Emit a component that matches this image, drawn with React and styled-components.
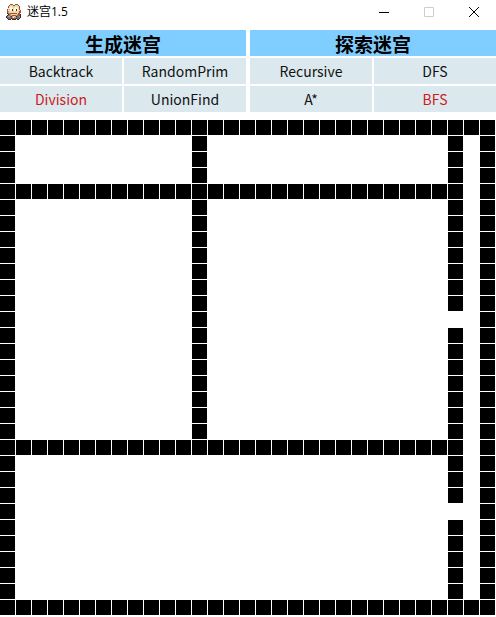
import React, { useState } from "react";
import styled, { createGlobalStyle } from "styled-components";

const GlobalStyle = createGlobalStyle`
  *, *::before, *::after { box-sizing: border-box; }
  body {
    margin: 0;
    background: #fff;
    color: #000;
    font-family: "Noto Sans CJK SC", sans-serif;
  }
`;

const Window = styled.main`
  display: flex;
  flex-direction: column;
`;

const TitleBar = styled.header`
  display: flex;
  align-items: center;
  height: 24px;
  margin-bottom: 6px;
  padding-left: 6px;
`;

const Title = styled.h1`
  flex: 1;
  margin: 0 0 0 5px;
  font-family: "Open Sans", "Noto Sans CJK SC", sans-serif;
  font-size: 12px;
  line-height: 24px;
  font-weight: 400;
`;

const WindowButton = styled.button`
  display: flex;
  align-items: center;
  justify-content: center;
  width: 45px;
  height: 24px;
  padding: 0;
  border: 0;
  background: transparent;
  color: ${({ disabled }) => (disabled ? "#cccfc8" : "#000")};
`;

const Toolbar = styled.div`
  display: grid;
  grid-template-columns: 1fr 1fr;
  gap: 4px;
  margin-bottom: 8px;
`;

const Group = styled.section`
  display: grid;
  grid-template-columns: 1fr 1fr;
  grid-auto-rows: 26px;
  gap: 2px;
`;

const GroupTitle = styled.h2`
  grid-column: 1 / -1;
  margin: 0;
  background: #80ceff;
  font-size: 19px;
  line-height: 28px;
  font-weight: 700;
  text-align: center;
`;

const OptionButton = styled.button`
  padding: 0;
  border: 0;
  background: #dbe9ee;
  color: ${({ $active }) => ($active ? "#cb1b1b" : "#111")};
  font-family: inherit;
  font-size: 14px;
  line-height: 26px;
  text-align: center;
`;

const MazeGrid = styled.div`
  display: grid;
  grid-template-columns: repeat(31, 1fr);
  gap: 1px;
  padding: 0 1px 1px 0;
`;

const Cell = styled.div`
  aspect-ratio: 1;
  background: ${({ $wall }) => ($wall ? "#000" : "#fff")};
`;

const ICON_COLORS = {
  k: "#3b2a25",
  b: "#8c5a3c",
  y: "#eed9a0",
  w: "#fffaf0",
  r: "#b8453a",
  g: "#77706f",
  l: "#aaa39e",
  o: "#d99b5b",
};

const ICON_ROWS = [
  "....bbb..bbb....",
  "...byyybbyyyb...",
  "..byyyyyyyyyyb..",
  "..rywwyyywwyyr..",
  "..ywwwwywwwwyr..",
  ".ryowwkywwkwyr..",
  ".ryywwkywwkwyyr.",
  ".royyyyyyyyyyrr.",
  ".boyyyyyyyyyyrb.",
  ".kborrrrrrryrb..",
  "..kboyyyyyyorbk.",
  ".kgglobbbblggbk.",
  "kgllgklyylkgglk.",
  "kggggglyolggggk.",
  ".kgggkbrrbkggk..",
  "..kkk.kkkk.kk...",
];

function AppIcon() {
  return (
    <svg width="16" height="16" viewBox="0 0 16 16" shapeRendering="crispEdges" aria-hidden="true">
      {ICON_ROWS.flatMap((row, y) =>
        [...row].map((key, x) =>
          key === "." ? null : (
            <rect key={`${x}-${y}`} x={x} y={y} width="1" height="1" fill={ICON_COLORS[key]} />
          )
        )
      )}
    </svg>
  );
}

const GLYPHS = {
  minimize: <path d="M0 5.5h10" />,
  maximize: <path d="M.5.5h9v9h-9z" />,
  close: <path d="M0 0l10 10M10 0l-10 10" />,
};

function WindowControl({ type, label, disabled }) {
  return (
    <WindowButton type="button" aria-label={label} disabled={disabled}>
      <svg width="10" height="10" viewBox="0 0 10 10" fill="none" stroke="currentColor">
        {GLYPHS[type]}
      </svg>
    </WindowButton>
  );
}

function OptionGroup({ title, options, initial }) {
  const [selected, setSelected] = useState(initial);
  return (
    <Group>
      <GroupTitle>{title}</GroupTitle>
      {options.map((option) => (
        <OptionButton
          key={option}
          type="button"
          $active={option === selected}
          aria-pressed={option === selected}
          onClick={() => setSelected(option)}
        >
          {option}
        </OptionButton>
      ))}
    </Group>
  );
}

const SIZE = 31;
const LAST = SIZE - 1;

function isWall(row, col) {
  if (row === 0 || row === LAST || col === 0 || col === LAST) return true;
  if (col === 28) return row !== 12 && row !== 24;
  if (col < 28 && (row === 4 || row === 20)) return true;
  return col === 12 && row < 20;
}

function Maze() {
  return (
    <MazeGrid role="img" aria-label="迷宫">
      {Array.from({ length: SIZE * SIZE }, (_, i) => (
        <Cell key={i} $wall={isWall(Math.floor(i / SIZE), i % SIZE)} />
      ))}
    </MazeGrid>
  );
}

export default function App() {
  return (
    <Window>
      <GlobalStyle />
      <TitleBar>
        <AppIcon />
        <Title>迷宫1.5</Title>
        <WindowControl type="minimize" label="最小化" />
        <WindowControl type="maximize" label="最大化" disabled />
        <WindowControl type="close" label="关闭" />
      </TitleBar>
      <Toolbar>
        <OptionGroup
          title="生成迷宫"
          options={["Backtrack", "RandomPrim", "Division", "UnionFind"]}
          initial="Division"
        />
        <OptionGroup
          title="探索迷宫"
          options={["Recursive", "DFS", "A*", "BFS"]}
          initial="BFS"
        />
      </Toolbar>
      <Maze />
    </Window>
  );
}
